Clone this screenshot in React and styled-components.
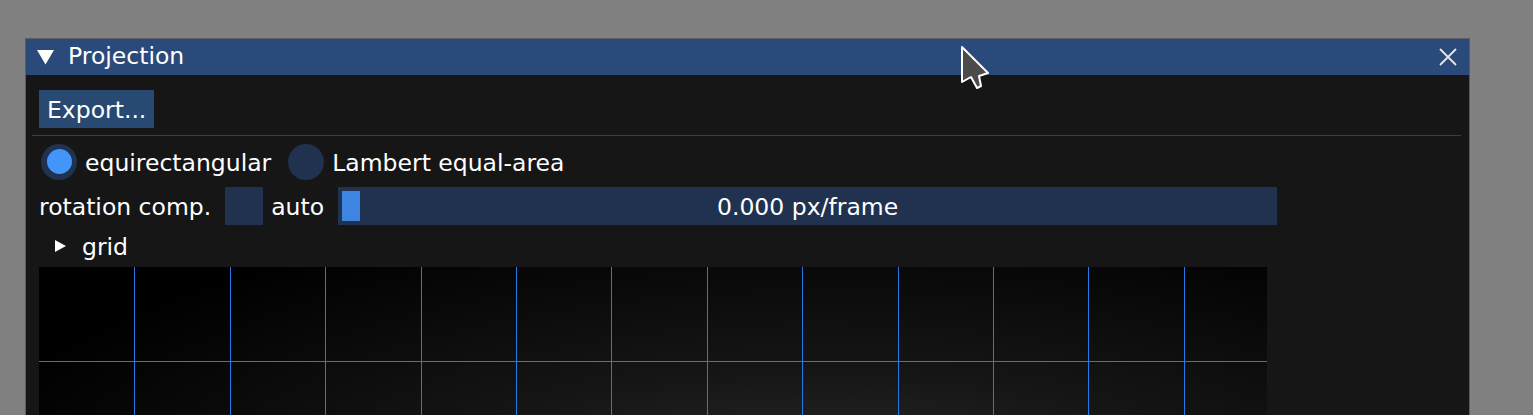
import React from "react";
import styled, { createGlobalStyle } from "styled-components";

const GlobalStyle = createGlobalStyle`
  html, body {
    margin: 0;
    padding: 0;
    background: #808080;
    font-family: "DejaVu Sans", "Liberation Sans", sans-serif;
  }
`;

const Page = styled.div`
  position: relative;
  height: 415px;
  overflow: hidden;
  background: #808080;
  padding: 38px 0 0 25px;
  box-sizing: border-box;
`;

const Window = styled.div`
  width: 1445px;
  box-sizing: border-box;
  border: 1px solid #5c5c62;
  background: #161616;
  display: flex;
  flex-direction: column;
`;

const TitleBar = styled.div`
  flex-shrink: 0;
  height: 36px;
  background: #294a7a;
  display: flex;
  align-items: center;
  padding: 0 12px 0 11px;
  color: #ffffff;
  font-size: 23.5px;
`;

const TitleText = styled.span`
  margin-left: 14px;
  line-height: 1;
`;

const CloseBox = styled.span`
  margin-left: auto;
  display: flex;
  align-items: center;
`;

const Body = styled.div`
  display: flex;
  flex-direction: column;
  padding: 15px 14px 0 13px;
  color: #ffffff;
  font-size: 23.5px;
`;

const Button = styled.div`
  align-self: flex-start;
  height: 38px;
  display: flex;
  align-items: center;
  padding: 1px 8px 0;
  box-sizing: border-box;
  background: #284971;
  color: #ffffff;
`;

const Separator = styled.div`
  height: 1px;
  background: #3e3e45;
  margin: 7px -6px 7px -7px;
`;

const Row = styled.div`
  display: flex;
  align-items: center;
  gap: ${(p) => p.$gap || 14}px;
  height: ${(p) => p.$h || 38}px;
  margin-bottom: 7px;
  padding-left: ${(p) => p.$pl || 0}px;
`;

const RadioItem = styled.label`
  display: flex;
  align-items: center;
  gap: 8px;
`;

const RadioCircle = styled.span`
  width: 36px;
  height: 36px;
  margin-left: 2px;
  border-radius: 50%;
  background: #203250;
  display: flex;
  align-items: center;
  justify-content: center;
`;

const RadioDot = styled.span`
  width: 25px;
  height: 25px;
  border-radius: 50%;
  background: #4296fa;
`;

const Label = styled.span`
  white-space: nowrap;
  line-height: 1;
  padding-top: 4px;
`;

const InlineGroup = styled.div`
  display: flex;
  align-items: center;
  gap: ${(p) => p.$gap || 8}px;
`;

const Checkbox = styled.span`
  width: 38px;
  height: 38px;
  background: #203250;
`;

const Slider = styled.div`
  position: relative;
  width: 939px;
  height: 38px;
  background: #203250;
  display: flex;
  align-items: center;
  justify-content: center;
`;

const Grab = styled.span`
  position: absolute;
  left: 4px;
  top: 4px;
  width: 18px;
  height: 30px;
  background: #3d85e0;
`;

const TreeRow = styled.div`
  display: flex;
  align-items: center;
  gap: 16px;
  height: 28px;
  padding-left: 16px;
  margin-bottom: 7px;
`;

const Viewport = styled.div`
  width: 1228px;
  height: 400px;
  background: radial-gradient(
    ellipse 900px 320px at 780px 250px,
    #333333 0%,
    #161616 45%,
    #000000 100%
  );
  flex-shrink: 0;
`;

const Cursor = styled.svg`
  position: absolute;
  left: 960px;
  top: 45px;
`;

const GRID_STEP = 95.4;

function GridLines() {
  const verticals = [];
  for (let i = 1; i <= 12; i++) verticals.push(Math.round(i * GRID_STEP) + 0.5);
  const horizontals = [94.5, 189.5, 284.5];
  return (
    <svg width="1228" height="400" style={{ display: "block" }}>
      {verticals.map((x) => (
        <line key={"v" + x} x1={x} y1="0" x2={x} y2="400" stroke="#1f7be6" strokeWidth="1" />
      ))}
      {horizontals.map((y) => (
        <line key={"h" + y} x1="0" y1={y} x2="1228" y2={y} stroke="#1f7be6" strokeWidth="1" />
      ))}
    </svg>
  );
}

export default function App() {
  return (
    <>
      <GlobalStyle />
      <Page>
        <Window>
          <TitleBar>
            <svg width="17" height="15" viewBox="0 0 17 15">
              <polygon points="0,0 17,0 8.5,14.5" fill="#ffffff" />
            </svg>
            <TitleText>Projection</TitleText>
            <CloseBox>
              <svg width="18" height="18" viewBox="0 0 18 18">
                <path d="M1 1 L17 17 M17 1 L1 17" stroke="#e6e6e6" strokeWidth="1.8" />
              </svg>
            </CloseBox>
          </TitleBar>
          <Body>
            <Button>Export...</Button>
            <Separator />
            <Row $h={37} $gap={15}>
              <RadioItem>
                <RadioCircle>
                  <RadioDot />
                </RadioCircle>
                <Label>equirectangular</Label>
              </RadioItem>
              <RadioItem>
                <RadioCircle />
                <Label>Lambert equal-area</Label>
              </RadioItem>
            </Row>
            <Row $h={38}>
              <Label>rotation comp.</Label>
              <InlineGroup $gap={8}>
                <Checkbox />
                <Label>auto</Label>
              </InlineGroup>
              <Slider>
                <Grab />
                <Label>0.000 px/frame</Label>
              </Slider>
            </Row>
            <TreeRow>
              <svg width="11" height="12" viewBox="0 0 11 12">
                <polygon points="0,0 11,6 0,12" fill="#ffffff" />
              </svg>
              <Label>grid</Label>
            </TreeRow>
            <Viewport>
              <GridLines />
            </Viewport>
          </Body>
        </Window>
        <Cursor width="30" height="46" viewBox="0 0 30 46">
          <path
            d="M2 2 L2 37 L11 32 L17 43 L21 41 L19 31 L28 28 Z"
            fill="#4b4b4b"
            stroke="#ffffff"
            strokeWidth="2"
            strokeLinejoin="round"
          />
        </Cursor>
      </Page>
    </>
  );
}
